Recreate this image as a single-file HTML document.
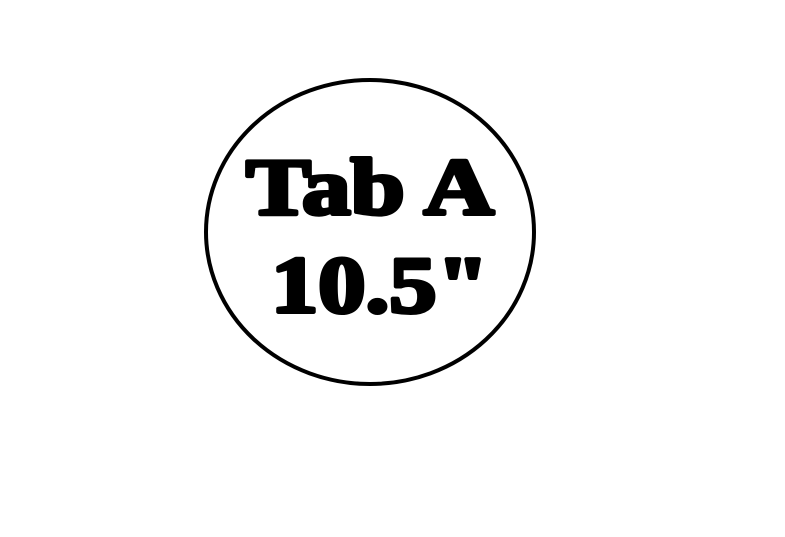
<!DOCTYPE html>
<html><head><style>
html,body{margin:0;padding:0;background:#fff;width:785px;height:537px;overflow:hidden}
</style></head><body>
<svg width="785" height="537" xmlns="http://www.w3.org/2000/svg">
<rect width="785" height="537" fill="#fff"/>
<ellipse cx="370" cy="232" rx="164" ry="152" fill="none" stroke="#000" stroke-width="4"/>
<g font-family="'Liberation Serif', serif" font-weight="bold" font-size="80" fill="#000" stroke="#000" stroke-width="4" stroke-linejoin="round">
<text x="246" y="214" textLength="248" lengthAdjust="spacingAndGlyphs">Tab A</text>
<text x="271" y="312" textLength="218" lengthAdjust="spacingAndGlyphs">10.5"</text>
</g>
</svg>
</body></html>
